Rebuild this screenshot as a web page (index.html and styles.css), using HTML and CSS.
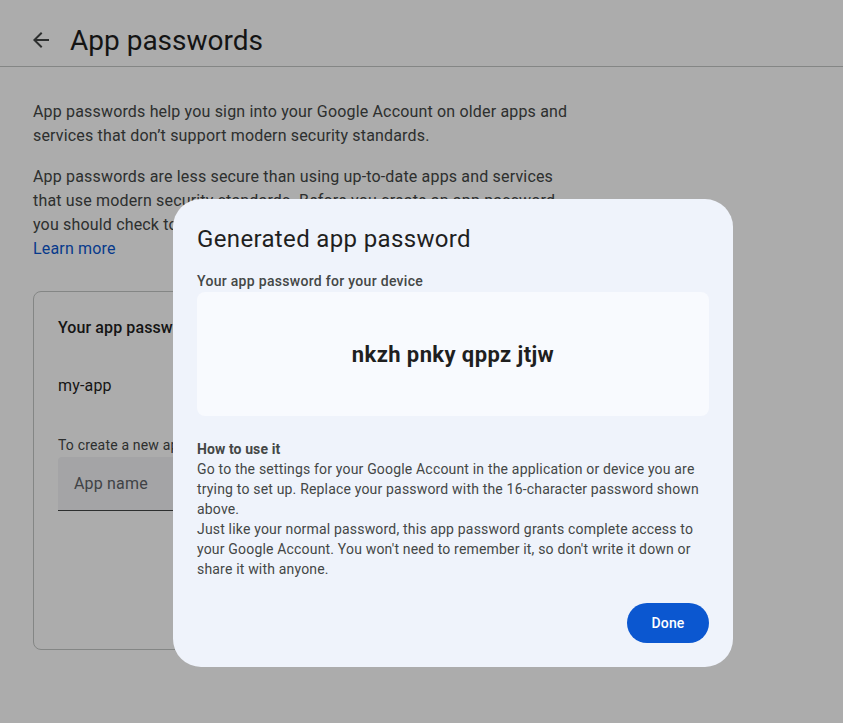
FILE: index.html
```html
<!DOCTYPE html>
<html>
<head>
<meta charset="utf-8">
<link rel="stylesheet" href="styles.css">
</head>
<body>
<header class="topbar">
  <span class="back">
    <svg width="24" height="24" viewBox="0 0 24 24"><path d="M20 11H7.83l5.59-5.59L12 4l-8 8 8 8 1.41-1.41L7.83 13H20v-2z" fill="#444746"/></svg>
  </span>
  <h1 class="title">App passwords</h1>
</header>
<main class="content">
  <p class="para">App passwords help you sign into your Google Account on older apps and services that don’t support modern security standards.</p>
  <p class="para">App passwords are less secure than using up-to-date apps and services that use modern security standards. Before you create an app password, you should check to see if your app needs this in order to sign in.<br><a class="link" href="#">Learn more</a></p>
  <section class="card">
    <h2 class="card-title">Your app passwords</h2>
    <div class="app-item">my-app</div>
    <div class="hint">To create a new app specific password, type a name for it below...</div>
    <div class="input">App name</div>
  </section>
</main>
<div class="scrim"></div>
<div class="dialog">
  <h2 class="dlg-title">Generated app password</h2>
  <div class="label">Your app password for your device</div>
  <div class="pwbox">nkzh pnky qppz jtjw</div>
  <div class="how">
    <div class="how-title">How to use it</div>
    <div class="how-text">Go to the settings for your Google Account in the application or device you are trying to set up. Replace your password with the 16-character password shown above.</div>
    <div class="how-text">Just like your normal password, this app password grants complete access to your Google Account. You won't need to remember it, so don't write it down or share it with anyone.</div>
  </div>
  <div class="actions"><button class="done">Done</button></div>
</div>
</body>
</html>
```
FILE: styles.css
```css
html, body {
  margin: 0;
  padding: 0;
  background: #ffffff;
  font-family: Roboto, "Liberation Sans", sans-serif;
  color: #1f1f1f;
}
.topbar {
  height: 67px;
  border-bottom: 1px solid #c4c7c5;
  display: flex;
  align-items: center;
  box-sizing: border-box;
  padding-left: 29px;
  padding-top: 14px;
}
.back {
  width: 24px;
  height: 24px;
  display: flex;
  margin-right: 17px;
  margin-top: 0;
}
.title {
  margin: 0;
  font-size: 28px;
  font-weight: 400;
  color: #1f1f1f;
  letter-spacing: 0;
}
.content {
  padding: 33px 33px 0 33px;
  width: 540px;
}
.para {
  margin: 0 0 17px 0;
  font-size: 16px;
  line-height: 24px;
  letter-spacing: 0.17px;
  color: #444746;
}
.link {
  color: #0b57d0;
  text-decoration: none;
}
.card {
  margin-top: 30px;
  border: 1px solid #c4c7c5;
  border-radius: 8px;
  height: 359px;
  box-sizing: border-box;
  padding: 24px 24px;
}
.card-title {
  margin: 0;
  font-size: 16px;
  font-weight: 500;
  line-height: 24px;
  letter-spacing: 0.1px;
  color: #1f1f1f;
}
.app-item {
  margin-top: 34px;
  font-size: 16px;
  line-height: 24px;
  letter-spacing: 0.17px;
  color: #1f1f1f;
}
.hint {
  margin-top: 38px;
  font-size: 14px;
  line-height: 18px;
  letter-spacing: 0.18px;
  color: #444746;
}
.input {
  margin-top: 3px;
  height: 54px;
  box-sizing: border-box;
  background: #f3f4f6;
  border-bottom: 1px solid #444746;
  border-radius: 4px 4px 0 0;
  padding-left: 16px;
  display: flex;
  align-items: center;
  font-size: 16px;
  letter-spacing: 0.17px;
  color: #5f6368;
}
.scrim {
  position: fixed;
  inset: 0;
  background: rgba(0, 0, 0, 0.325);
}
.dialog {
  position: absolute;
  left: 173px;
  top: 199px;
  width: 560px;
  height: 468px;
  box-sizing: border-box;
  background: #eff3fb;
  border-radius: 28px;
  padding: 24px 24px 24px 24px;
  display: flex;
  flex-direction: column;
}
.dlg-title {
  margin: 0;
  font-size: 24px;
  font-weight: 400;
  line-height: 32px;
  letter-spacing: 0.35px;
  color: #1f1f1f;
}
.label {
  margin-top: 16px;
  font-size: 14px;
  line-height: 20px;
  font-weight: 500;
  letter-spacing: 0.3px;
  color: #444746;
}
.pwbox {
  margin-top: 1px;
  height: 124px;
  background: #f8fafe;
  border-radius: 8px;
  display: flex;
  align-items: center;
  justify-content: center;
  font-size: 22px;
  font-weight: 700;
  letter-spacing: 0.4px;
  color: #1f1f1f;
}
.how {
  margin-top: 23px;
}
.how-title {
  font-size: 14px;
  font-weight: 700;
  line-height: 20px;
  letter-spacing: 0.1px;
  color: #444746;
}
.how-text {
  font-size: 14px;
  line-height: 20px;
  letter-spacing: 0.18px;
  color: #444746;
}
.actions {
  margin-top: auto;
  display: flex;
  justify-content: flex-end;
}
.done {
  width: 82px;
  height: 40px;
  border: none;
  border-radius: 20px;
  background: #0b57d0;
  color: #ffffff;
  font-family: Roboto, "Liberation Sans", sans-serif;
  font-size: 14px;
  font-weight: 500;
  letter-spacing: 0.1px;
  margin-bottom: 0;
}
```
